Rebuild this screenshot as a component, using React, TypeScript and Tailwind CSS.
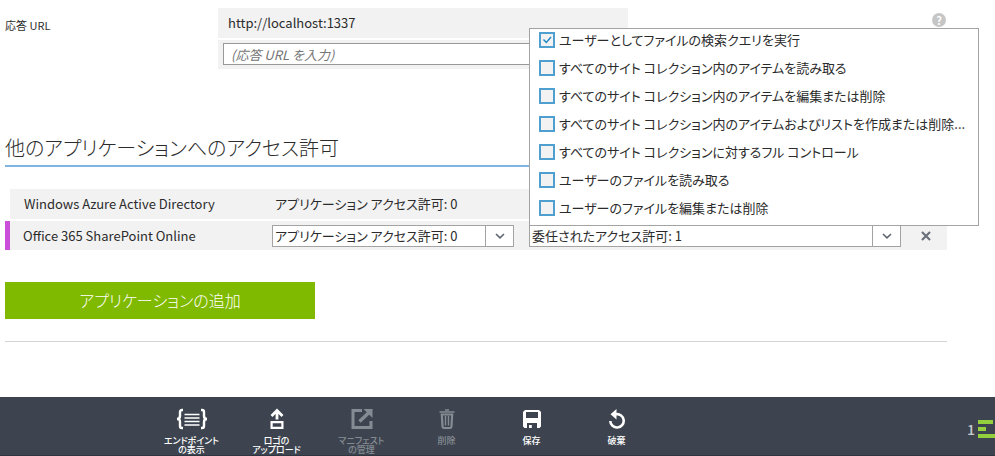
import { useState, type ReactNode } from "react";

type Permission = { label: string; granted: boolean };

const delegatedPermissions: Permission[] = [
  { label: "ユーザーとしてファイルの検索クエリを実行", granted: true },
  { label: "すべてのサイト コレクション内のアイテムを読み取る", granted: false },
  { label: "すべてのサイト コレクション内のアイテムを編集または削除", granted: false },
  { label: "すべてのサイト コレクション内のアイテムおよびリストを作成または削除...", granted: false },
  { label: "すべてのサイト コレクションに対するフル コントロール", granted: false },
  { label: "ユーザーのファイルを読み取る", granted: false },
  { label: "ユーザーのファイルを編集または削除", granted: false },
];

function Chevron() {
  return (
    <svg viewBox="0 0 10 6" className="h-1.5 w-2.5" fill="none" stroke="#5f6670" strokeWidth="1.6" aria-hidden="true">
      <path d="M1 1 5 4.800 9 1" />
    </svg>
  );
}

function PermissionMenu({ items, onToggle }: { items: Permission[]; onToggle: (index: number) => void }) {
  return (
    <ul className="absolute -left-px bottom-full w-[450px] border border-[#a3a3a3] bg-white">
      {items.map((item, index) => (
        <li key={item.label} className="h-7">
          <label className="flex h-[23px] items-center gap-1 pl-[9px]">
            <span className="grid shrink-0">
              <input
                type="checkbox"
                checked={item.granted}
                onChange={() => onToggle(index)}
                className="col-start-1 row-start-1 size-4 appearance-none border-2 border-[#4f9fd0] bg-[#f2f2f2]"
              />
              {item.granted && (
                <svg viewBox="0 0 16 16" className="pointer-events-none col-start-1 row-start-1 size-4" fill="none" stroke="#1c86c4" strokeWidth="1.4" aria-hidden="true">
                  <path d="M4.500 7.500 7.300 10.500 12 5" />
                </svg>
              )}
            </span>
            <span className="whitespace-nowrap">{item.label}</span>
          </label>
        </li>
      ))}
    </ul>
  );
}

function Command({ icon, label, disabled = false }: { icon: ReactNode; label: string; disabled?: boolean }) {
  return (
    <button
      type="button"
      disabled={disabled}
      className="flex w-[85px] flex-col items-center gap-[5px] pt-2.5 text-[9px] leading-[9px] font-medium text-white disabled:text-[#858b93]"
    >
      <span className="flex h-6 items-center">{icon}</span>
      <span className="whitespace-pre">{label}</span>
    </button>
  );
}

const endpointIcon = (
  <svg viewBox="0 0 32 22" className="h-[22px] w-8" fill="none" stroke="currentColor" aria-hidden="true">
    <path d="M7 2H6Q4 2 4 4v4q0 3-3 3 3 0 3 3v4q0 2 2 2h1M25 2h1q2 0 2 2v4q0 3 3 3-3 0-3 3v4q0 2-2 2h-1" strokeWidth="2.4" />
    <path d="M8.500 6.500h15M8.500 10h15M8.500 13.500h15M8.500 17h15" strokeWidth="1.500" />
  </svg>
);

const uploadIcon = (
  <svg viewBox="0 0 16 22" className="h-[22px] w-4" fill="none" stroke="currentColor" strokeWidth="2.2" aria-hidden="true">
    <path d="M8 11.500V2.500M2.500 8 8 2.500 13.500 8" strokeWidth="2.8" />
    <path d="M2.600 14.200h10.800v5.600H2.600z" />
  </svg>
);

const manifestIcon = (
  <svg viewBox="0 0 22 22" className="size-[22px]" fill="none" stroke="currentColor" aria-hidden="true">
    <path d="M11 2.500H2v17h18V13" strokeWidth="3" />
    <path d="M8.500 13.500 18 4.500" strokeWidth="3.4" />
    <path d="M12.500 1H21.500v9z" fill="currentColor" stroke="none" />
  </svg>
);

const trashIcon = (
  <svg viewBox="0 0 16 22" className="h-[22px] w-4" fill="none" stroke="currentColor" aria-hidden="true">
    <path d="M0.500 4h15M6 2h4" strokeWidth="1.6" />
    <path d="M2.800 6.500 3.500 18q.1 2 1.500 2h6q1.400 0 1.500-2l.700-11.500z" strokeWidth="2.2" />
    <path d="M6.500 8v9.500M9.500 8v9.500" strokeWidth="1.4" />
  </svg>
);

const saveIcon = (
  <svg viewBox="0 0 18 20" className="h-5 w-[18px]" fill="currentColor" fillRule="evenodd" aria-hidden="true">
    <path d="M2 1h14l2 2v14.500L16.500 19H14v-5H4v5H1.500L0 17.500V3zM3 3v6h12V3z" />
    <path d="M6 16h2.800v3H6z" />
  </svg>
);

const discardIcon = (
  <svg viewBox="0 0 18 20" className="h-5 w-[18px]" fill="none" stroke="currentColor" aria-hidden="true">
    <path d="M8 5.200A6.700 6.700 0 1 1 2.300 12" strokeWidth="2.6" />
    <path d="M8.500 0v10.500L2.500 5.200z" fill="currentColor" stroke="none" />
  </svg>
);

export default function App() {
  const [permissions, setPermissions] = useState(delegatedPermissions);
  const [open, setOpen] = useState(true);
  const granted = permissions.filter((p) => p.granted).length;

  const toggle = (index: number) =>
    setPermissions((list) => list.map((p, i) => (i === index ? { ...p, granted: !p.granted } : p)));

  return (
    <div className="flex min-h-screen flex-col bg-white font-['Noto_Sans_CJK_JP',sans-serif] text-[13px] leading-5 text-[#2b2b2b] [font-feature-settings:'palt']">
      <main className="pt-2 pr-12 pl-[5px]">
        <section className="flex items-start">
          <label htmlFor="reply-url" className="w-[213px] shrink-0 pt-[7px] text-[11px]">
            応答 URL
          </label>
          <div className="flex w-[410px] flex-col gap-0.5">
            <p className="h-[30px] bg-[#f2f2f2] px-2.5 pt-[5px]">http://localhost:1337</p>
            <div className="h-[29px] bg-[#f2f2f2] px-[5px] pt-[3px]">
              <input
                id="reply-url"
                type="text"
                placeholder="(応答 URL を入力)"
                className="block h-[22px] w-full border border-[#999999] bg-white px-[7px] italic placeholder:text-[#757575]"
              />
            </div>
          </div>
          <button
            type="button"
            aria-label="ヘルプ"
            className="mt-[5px] mr-px ml-auto flex size-3.5 items-center justify-center rounded-full bg-[#c6c6c6] text-[11px] font-bold text-white"
          >
            ?
          </button>
        </section>

        <h2 className="mt-16 border-b-2 border-[#7fb4e3] pb-0.5 text-xl leading-[30px] font-light">
          他のアプリケーションへのアクセス許可
        </h2>

        <ul className="mt-[22px] flex flex-col gap-0.5">
          <li className="ml-[5px] flex h-[30px] items-center bg-[#f2f2f2] pl-3.5">
            <span className="w-[251px] shrink-0">Windows Azure Active Directory</span>
            <span>アプリケーション アクセス許可: 0</span>
          </li>
          <li className="flex h-[29px] items-center border-l-[5px] border-[#c94fd8] bg-[#f2f2f2] pl-[13px]">
            <span className="w-[249px] shrink-0">Office 365 SharePoint Online</span>
            <div className="grid h-[22px] w-[242px] shrink-0 grid-cols-[1fr_28px] border border-[#a3a3a3] bg-white">
              <select
                aria-label="アプリケーション アクセス許可"
                className="col-span-2 col-start-1 row-start-1 appearance-none bg-transparent pl-0.5"
              >
                <option>アプリケーション アクセス許可: 0</option>
              </select>
              <span className="pointer-events-none col-start-2 row-start-1 flex items-center justify-center border-l border-[#a3a3a3]">
                <Chevron />
              </span>
            </div>
            <div className="relative ml-[15px] h-[22px] min-w-0 flex-1 border border-[#a3a3a3] bg-white">
              <button
                type="button"
                aria-haspopup="true"
                aria-expanded={open}
                onClick={() => setOpen(!open)}
                className="flex size-full items-stretch text-left"
              >
                <span className="flex-1 pl-0.5">委任されたアクセス許可: {granted}</span>
                <span className="flex w-7 items-center justify-center border-l border-[#a3a3a3]">
                  <Chevron />
                </span>
              </button>
              {open && <PermissionMenu items={permissions} onToggle={toggle} />}
            </div>
            <button type="button" aria-label="削除" className="flex w-[46px] shrink-0 justify-center pl-1">
              <svg viewBox="0 0 10 10" className="size-2.5" stroke="#6a707b" strokeWidth="2.2" aria-hidden="true">
                <path d="M1 1 9 9M9 1 1 9" />
              </svg>
            </button>
          </li>
        </ul>

        <button type="button" className="mt-8 block h-[37px] w-[310px] bg-[#80ba00] pb-0.5 text-base font-light text-white">
          アプリケーションの追加
        </button>

        <hr className="mt-[22px] border-[#d4d4d4]" />
      </main>

      <footer className="mt-auto flex h-[59px] items-stretch border-b border-[#2f3540] bg-[#3d444f] pl-[149px]">
        <Command icon={endpointIcon} label={"エンドポイント\nの表示"} />
        <Command icon={uploadIcon} label={"ロゴの\nアップロード"} />
        <Command icon={manifestIcon} label={"マニフェスト\nの管理"} disabled />
        <Command icon={trashIcon} label="削除" disabled />
        <Command icon={saveIcon} label="保存" />
        <Command icon={discardIcon} label="破棄" />
        <button type="button" aria-label="通知 1" className="ml-auto flex items-center gap-[3px] pt-1.5 text-sm font-medium text-[#c8cacd]">
          1
          <span className="flex w-[17px] flex-col gap-[3px]">
            <span className="h-1 w-[15px] bg-[#94cf3d]" />
            <span className="h-1 w-2 bg-[#94cf3d]" />
            <span className="h-1 bg-[#94cf3d]" />
          </span>
        </button>
      </footer>
    </div>
  );
}
